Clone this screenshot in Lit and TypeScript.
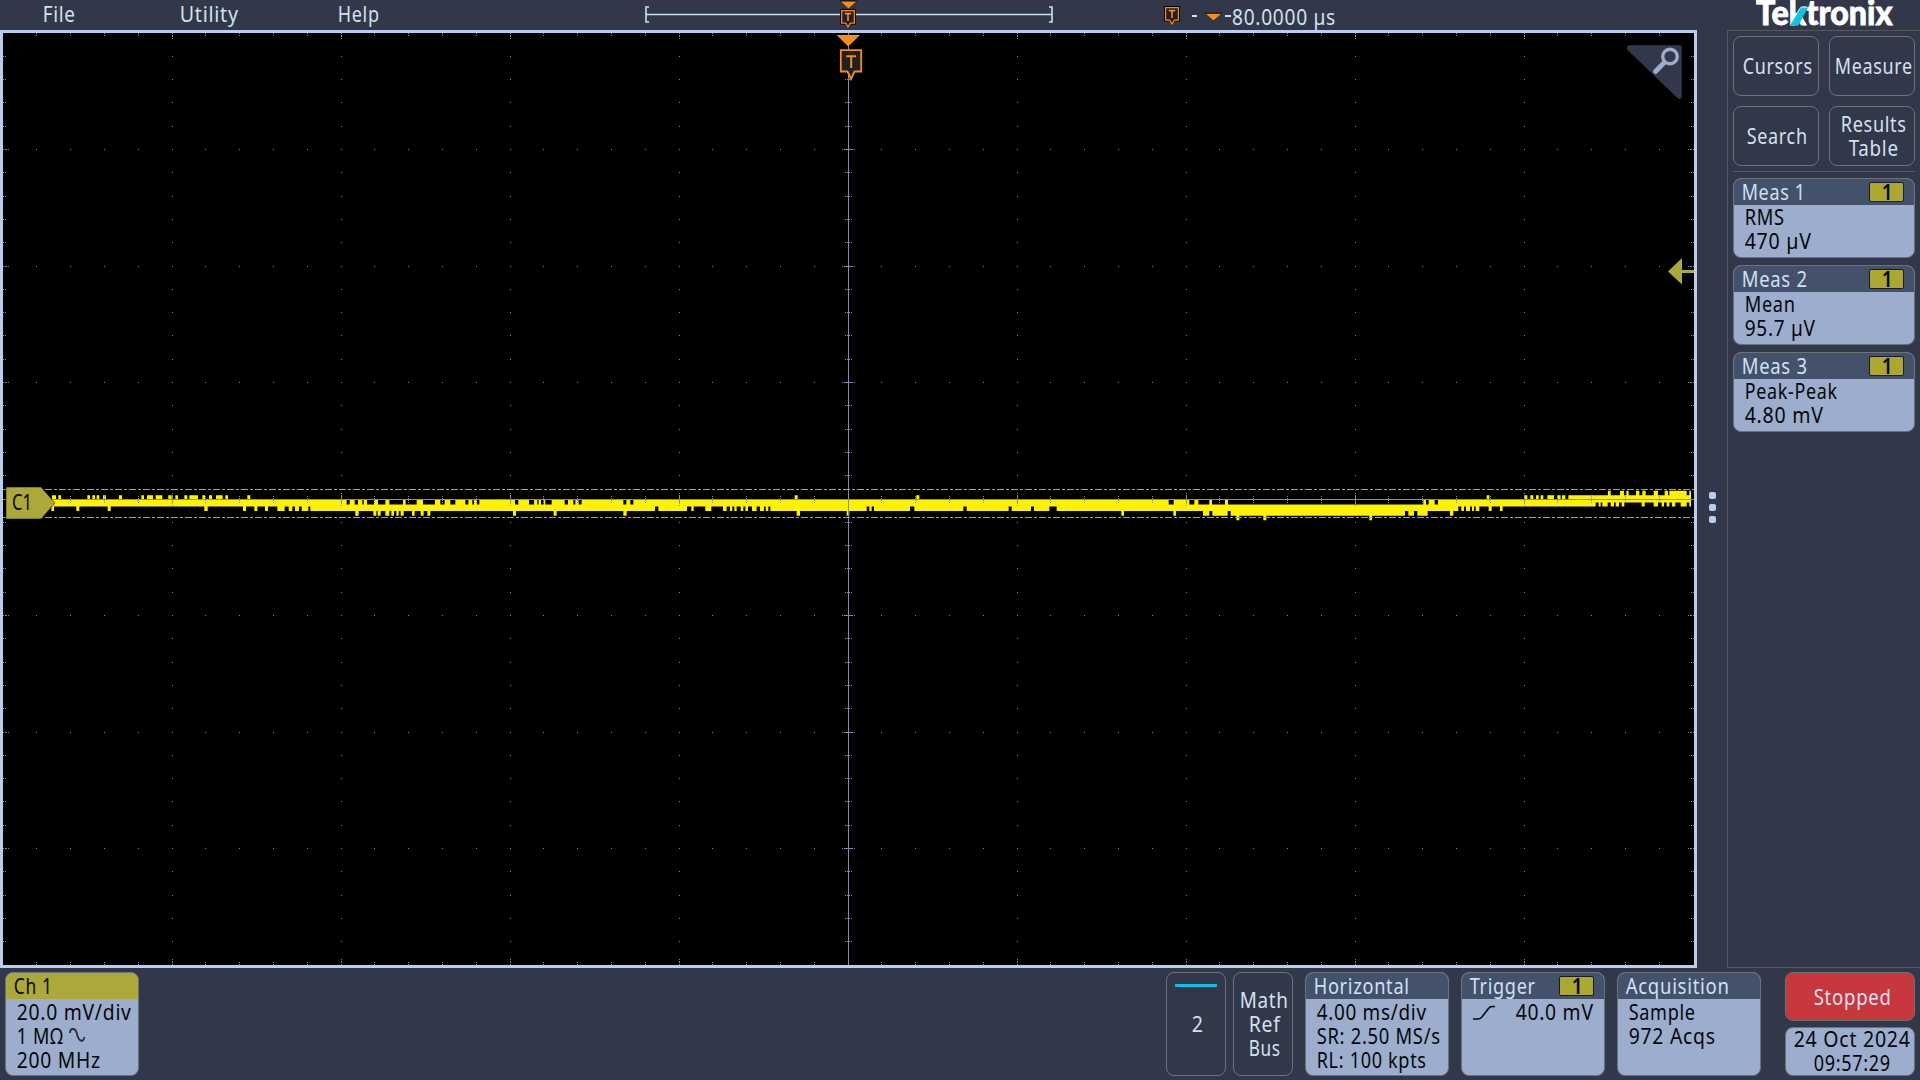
import { LitElement, html, svg, css } from "lit";
import { customElement, property } from "lit/decorators.js";

type Span = [number, number];

/* Spans are given in thirds of a pixel, relative to an x offset. */
const at = (offset: number, list: Span[]): Span[] =>
  list.map(([a, b]) => [offset + a / 3, offset + b / 3] as Span);

const invert = (gaps: Span[], from: number, to: number): Span[] => {
  const out: Span[] = [];
  let x = from;
  for (const [a, b] of gaps) {
    if (a > x) out.push([x, a]);
    x = b;
  }
  if (x < to) out.push([x, to]);
  return out;
};

const RIGHT = 1691;

const rowPeak = at(1340, [
  [804, 812], [840, 852], [859, 866], [888, 898], [907, 917], [941, 954],
  [974, 984], [988, 1040], [1048, 1053],
]);

const rowHigh = [
  ...at(0, [
    [156, 168], [175, 183], [262, 270], [277, 285], [290, 298], [309, 318],
    [357, 366], [424, 432], [441, 459], [467, 487], [505, 515], [526, 534],
    [553, 562], [568, 594], [607, 615], [627, 636], [648, 668], [676, 684],
    [742, 751],
  ]),
  ...at(480, [[944, 953], [1309, 1318]]),
  ...at(1340, [
    [440, 448], [555, 562], [571, 580], [588, 596], [602, 610], [622, 642],
    [652, 662], [666, 676], [685, 1053],
  ]),
];

const rowUpper = invert(
  [
    ...at(0, [
      [1040, 1049], [1064, 1074], [1087, 1091], [1101, 1122], [1134, 1156],
      [1168, 1209], [1217, 1250], [1269, 1305], [1321, 1334], [1351, 1366],
      [1396, 1405], [1417, 1422], [1431, 1438],
    ]),
    ...at(480, [
      [105, 115], [147, 162], [172, 176], [183, 191], [196, 215], [254, 264],
      [280, 286], [296, 305], [366, 376], [430, 439], [451, 460],
    ].filter(([a]) => a !== 366) as Span[]),
    ...at(960, [[626, 641], [688, 703], [715, 748], [756, 795], [804, 1140]]),
    ...at(1340, [[0, 250], [258, 266], [284, 294]]),
  ],
  52,
  1340 + 767 / 3,
);

const rowCore: Span[] = [[52, 1340 + 767 / 3]];

const rowCoreTail = at(1340, [
  [776, 782], [787, 803], [812, 822], [827, 837], [845, 853], [905, 914],
  [941, 954], [965, 972], [980, 988], [996, 1006], [1022, 1040], [1048, 1053],
]);

const rowLower = [
  ...at(0, [
    [154, 162], [229, 238], [323, 332], [613, 623], [729, 738], [763, 772],
    [795, 804], [832, 854], [866, 877], [885, 897], [905, 925],
  ]),
  ...invert(
    [
      ...at(480, [
        [525, 535], [621, 634], [641, 676], [694, 729], [740, 750],
        [757, 763], [770, 782], [790, 796], [804, 816], [830, 840],
        [852, 857], [865, 871], [1160, 1168], [1175, 1182], [1290, 1303],
      ]),
      ...at(960, [[10, 20], [146, 155], [213, 222], [268, 290]]),
    ],
    931 / 3,
    1340 + 355 / 3,
  ),
  ...at(1340, [[364, 372], [378, 390], [396, 402], [407, 418], [446, 455], [480, 488]]),
];

const rowLow = [
  ...at(0, [
    [1066, 1076], [1120, 1129], [1133, 1142], [1156, 1168], [1174, 1182],
    [1189, 1196], [1202, 1211], [1236, 1244], [1262, 1271], [1282, 1291],
  ]),
  ...at(480, [[99, 108], [221, 230], [430, 440], [950, 960], [1100, 1108]]),
  ...at(960, [[484, 492], [640, 648], [729, 748], [757, 803], [812, 1141]]),
  ...at(1340, [[0, 195], [205, 222], [232, 263], [330, 340]]),
];

const rowTrough = [...at(960, [[829, 838], [910, 919]]), ...at(1340, [[88, 96]])];

const rowPath = (spans: Span[], y1: number, y2: number) =>
  spans.map(([a, b]) => `M${a.toFixed(2)} ${y1}H${b.toFixed(2)}V${y2}H${a.toFixed(2)}Z`).join("");

const tracePath = [
  rowPath(rowPeak, 490.7, 495.4),
  rowPath(rowHigh, 495.3, 500),
  rowPath([[1340 + 767 / 3, RIGHT]], 500, 502.4),
  rowPath(rowUpper, 500, 504.5),
  rowPath(rowCore, 504.4, 506.5),
  rowPath(rowCoreTail, 502.3, 506.4),
  rowPath(rowLower, 506.4, 511),
  rowPath(rowLow, 510.9, 515.8),
  rowPath(rowTrough, 515.7, 520.3),
].join("");

const px = (x: number, y: number) => `M${x} ${y}h1v1h-1z`;
const gridX = (i: number) => Math.floor(3 + 33.8 * i + 0.001);
const gridY = (j: number) => Math.floor(33 + 23.3 * j + 0.001);

const buildGraticule = () => {
  let d = "";
  for (let i = 1; i < 50; i++) {
    const x = gridX(i);
    const major = i % 5 === 0;
    for (let j = 5; j < 40; j += 5) d += px(x, gridY(j));
    d += px(x, 33) + px(x, 35) + px(x, 962) + px(x, 964);
    if (major) {
      d += px(x, 36) + px(x, 38) + px(x, 959) + px(x, 961);
      for (let j = 1; j < 40; j++) d += px(x, gridY(j));
    }
  }
  for (let j = 1; j < 40; j++) {
    const y = gridY(j);
    d += px(3, y) + px(5, y) + px(1691, y) + px(1693, y);
    if (j % 5 === 0) d += px(6, y) + px(8, y) + px(1688, y) + px(1690, y);
  }
  return d;
};

const buildAxes = () => {
  let d = "M3 499h1691v1h-1691zM848 33h1v932h-1z";
  for (let i = 1; i < 50; i++) {
    const x = gridX(i);
    if (i % 5 === 0) d += `M${x} 495h1v9h-1z` + px(x, 493) + px(x, 505);
    else d += px(x, 496) + px(x, 498) + px(x, 500) + px(x, 502);
  }
  for (let j = 1; j < 40; j++) {
    const y = gridY(j);
    if (j % 5 === 0) d += `M844 ${y}h9v1h-9z` + px(842, y) + px(854, y);
    else d += px(845, y) + px(847, y) + px(849, y) + px(851, y);
  }
  return d;
};

const graticule = buildGraticule();
const axes = buildAxes();

/* One line of text set to an exact advance width. */
const line = (text: string, width: number, cls = "") => html`
  <svg class="line ${cls}" width=${width} height="24" role="text">
    <text x="0.7" y="18.600" textLength=${width} lengthAdjust="spacingAndGlyphs">${text}</text>
  </svg>`;

const textStyles = css`
  .line { display: block; flex: none; overflow: visible; }
  .line text {
    font: 21px "Noto Sans", "Open Sans", sans-serif;
    letter-spacing: 0.8px;
    fill: currentColor;
    white-space: pre;
  }
`;

const smallMarker = (x: number, y: number) => svg`
  <g transform="translate(${x} ${y})">
    <path d="M0 0H16V15.5H11L8 20L5 15.5H0Z" fill="#000"/>
    <path d="M1.6 1.6H14.4V14.2H10.4L8 18.2L5.6 14.2H1.6Z" fill="#221f22" stroke="#f68b1f" stroke-width="1.3"/>
    <path d="M4.8 4.6H11.2M8 4.6V12" fill="none" stroke="#f68b1f" stroke-width="1.6"/>
  </g>`;

const smallCaret = (x: number, y: number) => svg`
  <path d="M${x} ${y}h18l-9 8z" fill="#000"/>
  <path d="M${x + 1.2} ${y + 1}h15.600l-7.800 6.800z" fill="#f68b1f"/>`;

@customElement("scope-card")
class ScopeCard extends LitElement {
  @property() heading = "";
  @property({ type: Number }) headingWidth = 60;
  @property() source = "";
  @property() tone = "blue";

  static styles = [
    textStyles,
    css`
      :host { display: block; box-sizing: border-box; }
      .card {
        display: flex; flex-direction: column; box-sizing: border-box; height: 100%;
        border: 1px solid #6a7377; border-radius: 8px; overflow: hidden;
        background: #9dadcd; color: #050808;
      }
      .head {
        display: flex; justify-content: space-between; align-items: flex-start;
        box-sizing: border-box; height: 26px; flex: none;
        padding: 2px 10px 0 7px; background: #43516b; color: #cfe0f2;
      }
      .head.olive { background: #aca83a; color: #050808; }
      .badge {
        display: flex; justify-content: center; box-sizing: border-box;
        width: 35px; height: 20px; margin-top: 1px;
        border: 1px solid #1b1b22; border-radius: 2px; background: #aca82f; color: #050808;
      }
      .badge .line { margin-top: -2px; }
      .badge text { font-weight: 600; letter-spacing: 0; }
    `,
  ];

  render() {
    return html`
      <div class="card">
        <div class="head ${this.tone}">
          ${line(this.heading, this.headingWidth)}
          ${this.source ? html`<span class="badge">${line(this.source, 11)}</span>` : ""}
        </div>
        <slot></slot>
      </div>`;
  }
}

@customElement("app-root")
class AppRoot extends LitElement {
  static styles = [
    textStyles,
    css`
      :host { display: block; }
      .screen {
        display: grid; grid-template-columns: 1727px 193px; grid-template-rows: 30px 938px 112px;
        width: 1920px; height: 1080px; overflow: hidden; background: #32384a; color: #d3e1ef;
      }
      .topbar {
        display: grid; grid-template-columns: 137px 158px 303px 520px auto;
        padding-left: 42px; height: 30px;
      }
      .topbar .menu { padding-top: 3px; }
      .topbar svg { display: block; }
      .readout { letter-spacing: 0.8px; }
      .logo { padding-left: 28px; }
      .logo svg { display: block; overflow: visible; }
      .logo text { font: 900 34px Lato, sans-serif; fill: #fff; stroke: #fff; stroke-width: 0.8px; }
      .main { display: flex; }
      .scope {
        box-sizing: border-box; width: 1697px; height: 938px;
        border: 3px solid #bbcdee; background: #000;
      }
      .scope svg { display: block; }
      .handle { display: flex; flex-direction: column; gap: 5px; padding: 462px 0 0 12px; }
      .handle i { width: 7px; height: 7px; border-radius: 2px; background: #bbcdee; }
      .side {
        box-sizing: border-box; border: solid #55585d; border-width: 1px 0 1px 1px;
        padding: 5px 5px 0 5px;
      }
      .buttons {
        display: grid; grid-template-columns: 86px 86px; gap: 10px; padding-bottom: 5px;
        border-bottom: 1px solid #55585d;
      }
      .button {
        display: flex; flex-direction: column; align-items: center; justify-content: center;
        box-sizing: border-box; height: 60px; padding: 1px 0 0 1px;
        border: 1px solid #6a7377; border-radius: 8px;
      }
      .cards { display: flex; flex-direction: column; gap: 7px; padding-top: 6px; }
      .cards scope-card { height: 80px; }
      .rows { padding: 1px 0 0 10px; }
      .bottom {
        grid-column: 1 / 3; display: flex; padding: 4px 5px; height: 104px;
      }
      .bottom scope-card { width: 144px; }
      .bottom .channel { width: 134px; margin-right: 1027px; }
      .bottom .rows { padding-top: 2px; }
      .tile {
        display: flex; flex-direction: column; align-items: center; box-sizing: border-box;
        width: 60px; height: 104px; padding-left: 2px;
        border: 1px solid #6a7377; border-radius: 8px;
      }
      .tile.add { margin: 0 12px 0 7px; padding: 16px 0 0 1px; }
      .tile .bar { width: 42px; height: 3px; margin: 11px 2px 26px 0; background: #10c1e0; }
      .gap { margin: 0 12px; }
      .inline { display: flex; align-items: flex-start; }
      .status { display: flex; flex-direction: column; gap: 6px; margin-left: 24px; }
      .state, .clock {
        display: flex; flex-direction: column; align-items: center; box-sizing: border-box;
        width: 130px; height: 49px; padding-left: 3px;
        border: 1px solid #6a7377; border-radius: 8px;
      }
      .state { padding-top: 13px; background: #c7373b; color: #d9e2f4; }
      .clock { background: #9dadcd; color: #050808; }
    `,
  ];

  private topbar() {
    return html`
      <header class="topbar">
        <div class="menu">${line("File", 33)}</div>
        <div class="menu">${line("Utility", 59)}</div>
        <div class="menu">${line("Help", 42)}</div>
        <svg width="420" height="30" viewBox="640 0 420 30">
          <path d="M649 7H646V22H649M1049 7H1052V22H1049M646 14.500H1052" fill="none" stroke="#cbe0f0" stroke-width="1.600"/>
          ${smallCaret(839.5, 0.6)} ${smallMarker(840, 9)}
        </svg>
        <svg width="200" height="30" viewBox="1160 0 200 30">
          ${smallMarker(1164, 6)}
          <path d="M1192 16h5M1225 16h6" stroke="#d3e1ef" stroke-width="1.800"/>
          ${smallCaret(1204.5, 12.7)}
          <text class="readout" x="1232" y="24.600" textLength="104" lengthAdjust="spacingAndGlyphs"
            font-family="Noto Sans, sans-serif" font-size="21" fill="#d3e1ef">80.0000 µs</text>
        </svg>
      </header>
      <div class="logo">
        <svg width="140" height="30" viewBox="1755 0 140 30">
          <text y="25.200" x="1756" textLength="136.500" lengthAdjust="spacingAndGlyphs">Tektronix</text>
          <path d="M1801 7.500h7L1798.500 25.600h-8.500z" fill="#10c1e0"/>
        </svg>
      </div>`;
  }

  private scope() {
    return html`
      <main class="main">
        <div class="scope">
          <svg width="1691" height="932" viewBox="3 33 1691 932">
            <path d=${graticule} fill="#7d87a0" shape-rendering="crispEdges"/>
            <path d=${tracePath} fill="#fdf200"/>
            <path d=${axes} fill="#8089b4" shape-rendering="crispEdges"/>
            <path d="M3 489.500H1694M3 517.500H1694" stroke="#aca83a" stroke-dasharray="7 2 3 2" shape-rendering="crispEdges"/>
            <path d="M6 487H41L55 503L41 519H6Z" fill="#aca83a" stroke="#000" stroke-width="0.500"/>
            <text x="12" y="510.300" textLength="20" lengthAdjust="spacingAndGlyphs"
              font-family="Noto Sans, sans-serif" font-size="21" fill="#050808">C1</text>
            <path d="M1668 271.500L1682 258V270H1694V273H1682V284.500Z" fill="#aca83a"/>
            <path d="M836.500 35H860L848.300 46.500Z" fill="#f68b1f"/>
            <path d="M840.800 50.200H861.200V71.500H854.500L851 79L847.500 71.500H840.800Z"
              fill="#221f22" stroke="#f68b1f" stroke-width="1.800"/>
            <path d="M846.300 56.200H856M851.200 56.200V68" fill="none" stroke="#f68b1f" stroke-width="2"/>
            <path d="M1630 46H1680Q1681 46 1681 47V97Q1679.500 99 1678 97.500L1628 49.500Q1626.500 46 1630 46Z"
              fill="#32384a" stroke="#32384a" stroke-width="1.500" stroke-linejoin="round"/>
            <path d="M1664.500 62.300L1655.500 71.500" stroke="#9dadcd" stroke-width="4.800" stroke-linecap="round"/>
            <circle cx="1670" cy="56.500" r="7.300" fill="#32384a" stroke="#9dadcd" stroke-width="3.400"/>
          </svg>
        </div>
        <div class="handle"><i></i><i></i><i></i></div>
      </main>`;
  }

  private side() {
    return html`
      <aside class="side">
        <div class="buttons">
          <div class="button">${line("Cursors", 70)}</div>
          <div class="button">${line("Measure", 78)}</div>
          <div class="button">${line("Search", 61)}</div>
          <div class="button">${line("Results", 66)}${line("Table", 50)}</div>
        </div>
        <div class="cards">
          <scope-card heading="Meas 1" .headingWidth=${64} source="1">
            <div class="rows">${line("RMS", 40)}${line("470 µV", 67)}</div>
          </scope-card>
          <scope-card heading="Meas 2" .headingWidth=${66} source="1">
            <div class="rows">${line("Mean", 51)}${line("95.7 µV", 71)}</div>
          </scope-card>
          <scope-card heading="Meas 3" .headingWidth=${66} source="1">
            <div class="rows">${line("Peak-Peak", 93)}${line("4.80 mV", 79)}</div>
          </scope-card>
        </div>
      </aside>`;
  }

  private bottom() {
    return html`
      <footer class="bottom">
        <scope-card class="channel" tone="olive" heading="Ch 1" .headingWidth=${39}>
          <div class="rows">
            ${line("20.0 mV/div", 115)}
            <div class="inline">
              ${line("1 MΩ", 47)}
              <svg width="26" height="24" viewBox="0 0 26 24">
                <path d="M7 8C7 3 12.500 2 14 9C15.500 16 20.500 18.500 21.300 12" fill="none" stroke="#2b2d3c" stroke-width="1.800"/>
              </svg>
            </div>
            ${line("200 MHz", 84)}
          </div>
        </scope-card>
        <div class="tile"><span class="bar"></span>${line("2", 12)}</div>
        <div class="tile add">${line("Math", 49)}${line("Ref", 32)}${line("Bus", 32)}</div>
        <scope-card heading="Horizontal" .headingWidth=${96}>
          <div class="rows">
            ${line("4.00 ms/div", 110)}${line("SR: 2.50 MS/s", 124)}${line("RL: 100 kpts", 110)}
          </div>
        </scope-card>
        <scope-card class="gap" heading="Trigger" .headingWidth=${66} source="1">
          <div class="rows inline">
            <svg width="43" height="24" viewBox="0 0 43 24">
              <path d="M1 18H6Q8 18 9.500 16.500L16.500 7.500Q18 5.500 20 5.500H23" fill="none" stroke="#050808" stroke-width="1.600"/>
            </svg>
            ${line("40.0 mV", 78)}
          </div>
        </scope-card>
        <scope-card heading="Acquisition" .headingWidth=${104}>
          <div class="rows">${line("Sample", 67)}${line("972 Acqs", 87)}</div>
        </scope-card>
        <div class="status">
          <div class="state">${line("Stopped", 78)}</div>
          <div class="clock">${line("24 Oct 2024", 117)}${line("09:57:29", 77)}</div>
        </div>
      </footer>`;
  }

  render() {
    return html`<div class="screen">${this.topbar()}${this.scope()}${this.side()}${this.bottom()}</div>`;
  }
}
